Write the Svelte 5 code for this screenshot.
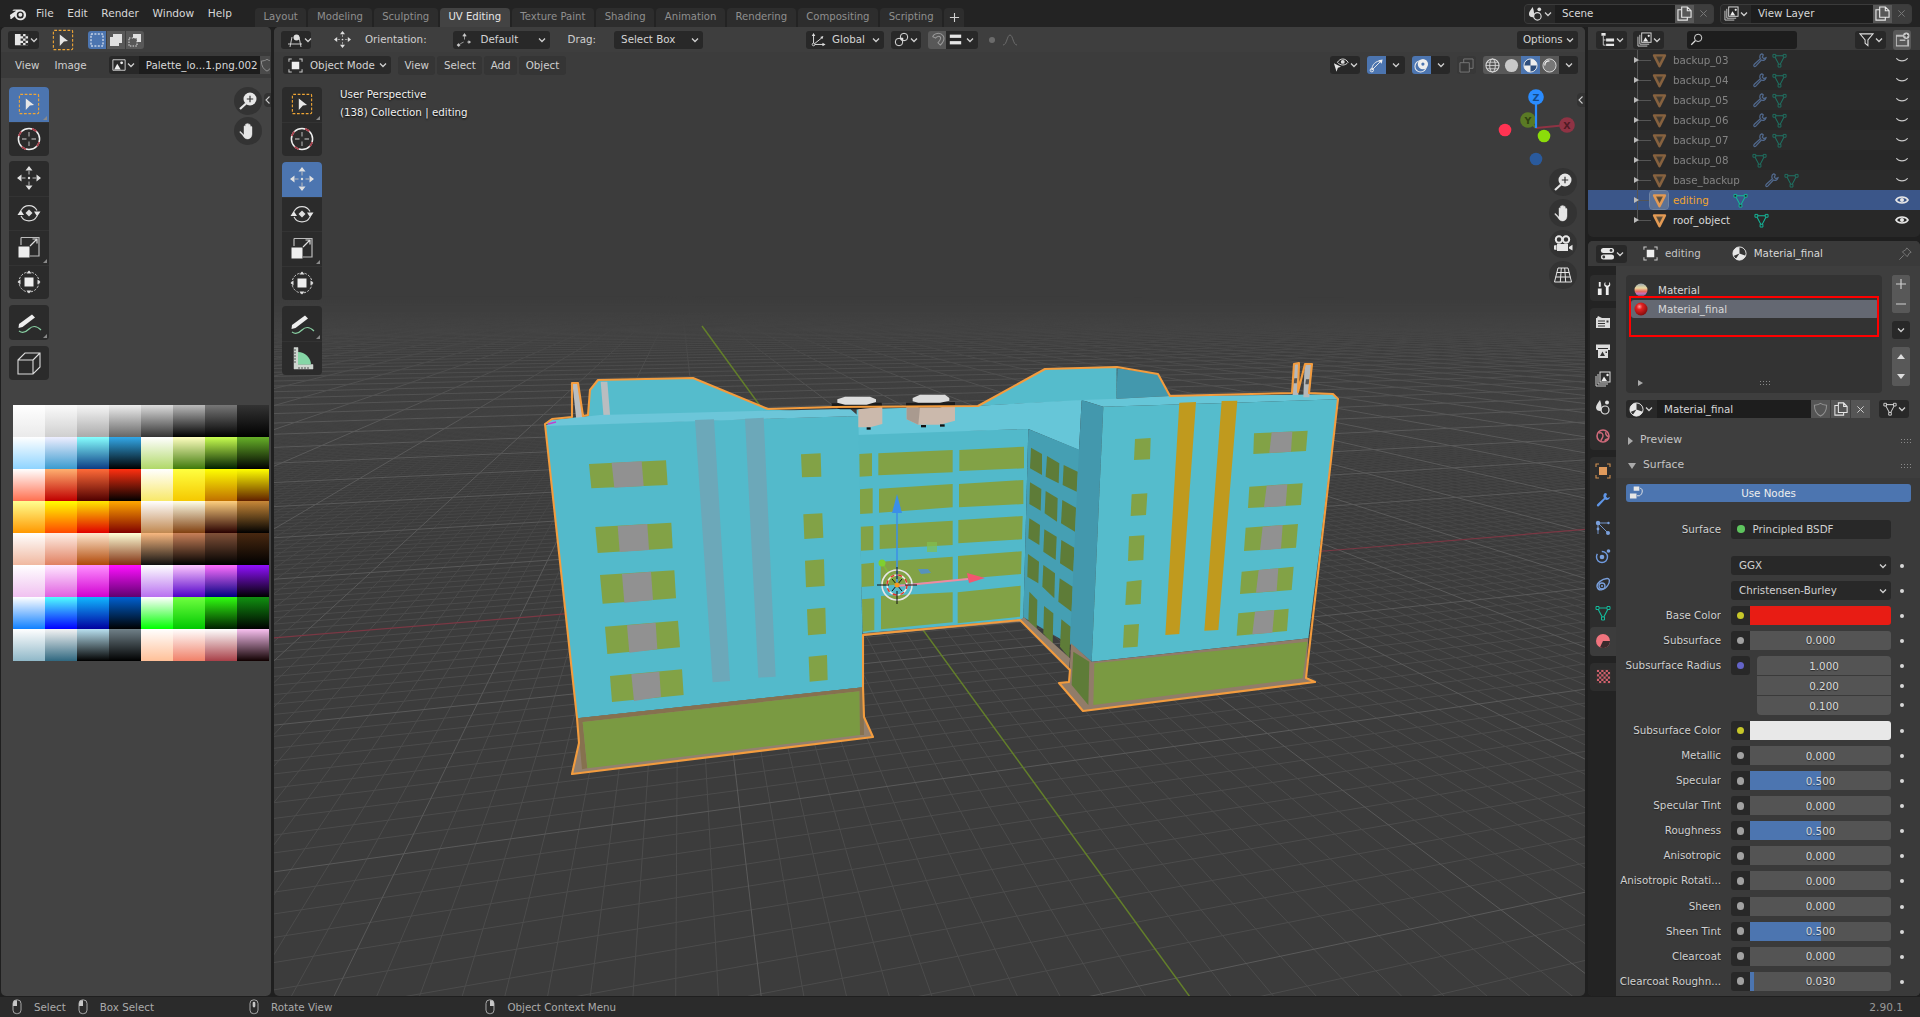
<script>
  const VPY = [680, 290], VPX = [4450, 290], O = [893, 586];
  let minor = '', major = '';
  for (let k = -900; k <= 900; k++) {
    if (k === 0) continue;
    const xA = O[0] + 17.9 * k;
    const t = (1000 - 290) / (O[1] - 290), t0 = 3 / (O[1] - 290);
    const seg = `M${(680 + (xA - 680) * t0).toFixed(1)} 293L${(680 + (xA - 680) * t).toFixed(1)} 1000`;
    if (k % 10 === 0) major += seg; else if (Math.abs(k) < 700) minor += seg;
  }
  for (let j = -35; j <= 1500; j++) {
    if (j === 0) continue;
    const v = 1 + 0.019 * j;
    if (v < 0.3) continue;
    const h = (O[1] - 290) / v, px = 680 + (O[0] - 680) * h / (O[1] - 290);
    const yAt = (x) => (290 + h * (VPX[0] - x) / (VPX[0] - px)).toFixed(1);
    const seg = `M270 ${yAt(270)}L1590 ${yAt(1590)}`;
    if (j % 10 === 0) { if (h > 3) major += seg; } else if (h > 30) minor += seg;
  }

  const G = '#82a246', GD = '#7a9a42', GR = '#919191', DG = '#5e7c38';
  const back = [
    ['#55bccc', '235,167 435,58 650,50 650,150 545,152'],
    ['#4398ad', '652,55 775,72 808,138 650,146'],
    ['#52b9ca', '-130,250 385,237 370,812 -112,850'],
    ['#66c6d8', '-130,178 235,167 545,150 537,300 385,237 -130,255'],
    ['#cbb9ac', '20,170 165,170 165,212 120,224 55,224 20,208'],
    ['#a99a8f', '20,170 60,170 55,224 20,208'],
    ['#1c1c1c', '18,158 165,156 165,166 120,172 60,172 18,168'],
    ['#dcdcdc', '38,144 60,134 135,134 148,144 148,152 120,158 55,158 38,154'],
    ['#111', '63,225 78,225 78,232 63,232'],
    ['#111', '120,223 134,223 134,230 120,230'],
    [G, '-122,312 -84,310 -84,378 -122,380'], [G, '-120,418 -82,415 -82,490 -120,492'], [G, '-118,530 -80,528 -80,600 -118,602'], [G, '-116,642 -78,638 -78,708 -116,711'], [G, '-114,748 -77,745 -77,840 -112,845'],
    [G, '-65,310 158,300 158,367 -65,376'], [G, '-63,416 158,402 158,472 -63,488'], [G, '-61,525 158,512 158,585 -61,597'], [G, '-58,635 158,620 158,690 -58,708'], [G, '-57,738 158,727 158,817 -57,838'],
    [G, '178,300 372,290 372,355 178,363'], [G, '177,402 370,390 370,462 177,472'], [G, '175,510 368,498 366,568 175,580'], [G, '174,618 365,604 363,672 174,688'], [G, '173,727 362,707 360,800 173,820'],
    ['#8f7b69', '-112,850 360,808 368,815 -112,858'],
    ['#459fb3', '385,237 540,300 512,885 370,802'],
    [DG, '393,293 426,312 426,375 390,355'], [DG, '441,318 478,340 476,400 437,380'], [DG, '491,345 533,365 530,425 488,405'],
    [DG, '390,397 424,417 422,482 388,462'], [DG, '437,423 473,445 471,515 434,490'], [DG, '487,450 528,473 525,545 483,520'],
    [DG, '388,505 420,525 418,585 385,565'], [DG, '433,538 470,560 467,630 430,605'], [DG, '484,570 523,593 520,665 480,640'],
    [DG, '384,612 417,635 415,700 382,680'], [DG, '430,645 465,670 463,745 427,710'], [DG, '479,685 518,710 515,785 475,755'],
    [DG, '388,725 412,750 410,845 385,815'], [DG, '432,768 460,790 458,885 430,850'], [DG, '484,808 512,830 508,925 480,890'],
    ['#93806e', '360,810 372,802 510,925 507,960'],
    ['#66c6d8', '545,150 610,170 1315,148 1300,133 810,138 650,146'],
    ['#4398ad', '545,150 610,170 575,935 510,880 537,300'],
    ['#55bccc', '610,170 1315,148 1225,865 575,935'],
    ['#c09a1e', '838,158 888,156 838,852 796,855'], ['#c09a1e', '965,153 1012,152 955,840 913,842'],
    [G, '705,267 752,264 750,328 702,330'], [G, '695,433 742,430 738,495 692,498'], [G, '687,559 733,556 730,630 684,633'], [G, '680,695 725,690 722,762 676,765'], [G, '672,825 717,822 713,890 669,893'],
    [G, '1062,250 1223,242 1218,303 1060,312'], [GR, '1115,247 1177,245 1173,305 1108,309'],
    [G, '1048,410 1208,400 1203,465 1044,474'], [GR, '1100,407 1162,403 1157,468 1092,472'],
    [G, '1037,533 1194,522 1188,593 1032,603'], [GR, '1088,530 1148,525 1143,596 1080,601'],
    [G, '1025,665 1181,650 1175,720 1020,732'], [GR, '1076,660 1135,655 1130,723 1068,728'],
    [G, '1015,790 1166,776 1161,843 1010,857'], [GR, '1065,785 1123,780 1117,848 1057,853'],
    ['#917c69', '513,880 575,935 1225,865 1218,985 1245,995 550,1083 478,1000 507,995'],
    [GD, '583,940 1222,875 1208,985 580,1065'],
    [DG, '520,905 568,935 565,1065 515,1005'],
    ['#b4b8bb', '1182,42 1198,40 1195,135 1178,135'], ['#b4b8bb', '1214,42 1236,42 1228,142 1210,142'],
    ['#555', '1183,85 1192,85 1190,100 1181,100'], ['#555', '1218,88 1228,88 1226,103 1216,103'],
  ];
  const front = [
    ['#55bccc', '210,120 235,90 520,84 745,178 1015,195 75,222 95,210 205,198'],
    ['#b9bdc0', '157,98 175,98 190,218 170,220'], ['#b9bdc0', '242,95 262,95 272,216 252,216'],
    ['#53bacb', '75,225 1015,198 1030,1012 172,1105'],
    ['#6cc6d9', '80,228 1015,198 990,176 240,195 90,212'],
    ['#6ca8b9', '525,210 582,208 630,993 578,997'], ['#6ca8b9', '675,206 731,203 767,980 715,983'],
    [G, '207,342 438,331 443,405 214,415'], [GR, '275,338 365,334 371,408 283,413'],
    [G, '226,531 454,518 458,595 233,609'], [GR, '293,528 382,522 387,600 299,606'],
    [G, '240,675 463,661 468,745 248,761'], [GR, '306,672 393,665 399,750 313,758'],
    [G, '255,830 474,812 480,892 262,912'], [GR, '321,826 407,818 412,898 328,908'],
    [G, '270,978 486,958 491,1035 276,1056'], [GR, '334,973 418,965 423,1040 342,1053'],
    [G, '843,313 902,310 904,380 846,382'], [G, '850,493 907,490 910,563 853,567'], [G, '855,632 912,628 914,708 858,712'], [G, '861,778 916,773 918,851 864,856'], [G, '866,920 921,915 923,990 869,995'],
    ['#93806e', '172,1105 1030,1012 1032,1100 1060,1160 157,1272 178,1180'],
    ['#86714f', '172,1105 1030,1012 1032,1155 1018,1155 1018,1024 188,1116 202,1255 186,1258'],
    [GD, '188,1116 1018,1024 1020,1155 202,1255'],
    ['#1c1c1c', '935,160 1085,158 1087,172 1015,178 960,178 935,170'],
    ['#cbb9ac', '1015,178 1087,170 1087,222 1050,232 1015,232'],
    ['#dcdcdc', '952,148 975,140 1050,140 1068,148 1068,156 1040,164 975,164 952,158'],
    ['#111', '1040,232 1052,232 1052,239 1040,239'],
  ];
  const outline = 'M545 424L552 419L572 417L572 383L578 383L583 416L588 415L590 390L598 380L693 378L768 409L833 407L978 406L1045 369L1117 367L1158 374L1170 396L1292 393L1294 364L1299 363L1298 392L1305 364L1312 364L1309 393L1333 394L1338 399L1308 660L1306 678L1315 682L1083 711L1059 683L1069 682L1070 670L1020 620L863 635L863 687L864 717L873 737L572 774L579 743L577 718Z';

  const ramps = [
    ['#fff,#eaeaea','#fbfbfb,#cfcfcf','#f6f6f6,#aaa','#eee,#666','#ddd,#333','#bbb,#000','#777,#000','#333,#000'],
    ['#fff,#8fd4ff','#eef,#3a9bcf','#86ffff,#0c3c84','#33a8e8,#000','#fff,#b0d868','#ffffc0,#3f7a0a','#c8ff50,#002000','#66b028,#000'],
    ['#fff,#ff7050','#ffb070,#c00000','#ff6a38,#500000','#ff3010,#000','#fff,#f8e868','#ffff40,#f5c800','#ffff00,#c07000','#ffff00,#602000'],
    ['#ffff90,#ff9800','#ffff00,#ff4800','#ffe800,#e00000','#ffa800,#800000','#fff,#c08850','#ffffe8,#804010','#ffd080,#280000','#c88838,#000'],
    ['#fff,#f0b8a0','#fff0e8,#e08060','#ffe8d0,#b04808','#ffffd8,#803010','#f8b880,#101010','#c88058,#000','#805038,#000','#482810,#000'],
    ['#fff,#f0c0f0','#ffe8ff,#e060e0','#ff90ff,#d000d0','#ff10ff,#600070','#fff,#b870f0','#ffc8ff,#5000c8','#ff70ff,#000080','#9010ff,#000'],
    ['#fff,#1080ff','#50ffff,#0000ff','#10b8ff,#0000a0','#0060d0,#000','#fff,#00ff00','#70ff40,#00c800','#30ff10,#002000','#109010,#000'],
    ['#fff,#90b8c8','#f4f4f4,#306880','#b8e0f0,#000','#708088,#000','#fff,#ffc098','#fff,#f08068','#fff,#a84048','#f8c0f0,#100000'],
  ].flat();

  const menus = ['File', 'Edit', 'Render', 'Window', 'Help'];
  const tabs = ['Layout', 'Modeling', 'Sculpting', 'UV Editing', 'Texture Paint', 'Shading', 'Animation', 'Rendering', 'Compositing', 'Scripting'];
  const objs = [
    ['backup_03', 1], ['backup_04', 1], ['backup_05', 1], ['backup_06', 1], ['backup_07', 1], ['backup_08', 0], ['base_backup', 1],
  ];
  const props = [
    { l: 'Metallic', v: '0.000', f: 0 }, { l: 'Specular', v: '0.500', f: 50 }, { l: 'Specular Tint', v: '0.000', f: 0 },
    { l: 'Roughness', v: '0.500', f: 50 }, { l: 'Anisotropic', v: '0.000', f: 0 }, { l: 'Anisotropic Rotati...', v: '0.000', f: 0 },
    { l: 'Sheen', v: '0.000', f: 0 }, { l: 'Sheen Tint', v: '0.500', f: 50 }, { l: 'Clearcoat', v: '0.000', f: 0 },
    { l: 'Clearcoat Roughn...', v: '0.030', f: 3 }, { l: '', v: '', f: 0 },
  ];
  const tg2 = ['t-render', 't-output', 't-layer', 't-scene', 't-world'];
  const tg3 = ['t-object', 't-mod', 't-part', 't-phys', 't-cons', 't-data', 't-mat'];
</script>

{#snippet ic(n, s = 16)}<svg class="ic" width={s} height={s}><use href={'#' + n} /></svg>{/snippet}
{#snippet chev()}<svg class="ic chev" width="10" height="10"><use href="#chev" /></svg>{/snippet}

<svg class="defs" width="0" height="0" aria-hidden="true">
  <defs>
    <symbol id="chev" viewBox="0 0 10 10"><path d="M2 3.5 5 6.5 8 3.5" fill="none" stroke="currentColor" stroke-width="1.3" /></symbol>
    <symbol id="logo" viewBox="0 0 20 20"><path d="M1 11.2 8 6.3H3.6L5.2 5H12.5C16 5 19 7.6 19 11S16 17 12.5 17C9.5 17 7 15.2 6.5 12.6L3 15.2C2 16 .6 14.9 1.6 14Z" fill="#e6e6e6" /><circle cx="12.5" cy="11" r="3.9" fill="#232323" /><circle cx="12.6" cy="10.9" r="2.2" fill="#e6e6e6" /></symbol>
    <symbol id="select" viewBox="0 0 24 24"><rect x="1.5" y="1.5" width="21" height="21" rx="1" fill="none" stroke="#f0a635" stroke-width="1.2" stroke-dasharray="3 1.8" /><path d="M8.5 6 17.5 13 13 13.5 8.5 18.5Z" fill="#e6e6e6" /></symbol>
    <symbol id="cursor" viewBox="0 0 24 24"><circle cx="12" cy="12" r="10.6" fill="none" stroke="#eee" stroke-width="1.5" /><circle cx="12" cy="12" r="10.6" fill="none" stroke="#a83c48" stroke-width="1.6" stroke-dasharray="5 11.6" stroke-dashoffset="-3" /><path d="M12 5v4.5M12 14.5V19M5 12h4.5M14.5 12H19" stroke="#9a9a9a" stroke-width="1.3" /></symbol>
    <symbol id="move" viewBox="0 0 24 24"><g fill="#e0e0e0"><path d="M12 0 15.5 4.5H8.5ZM12 24 8.5 19.5H15.5ZM0 12 4.5 8.5V15.5ZM24 12 19.5 15.5V8.5Z" /><circle cx="12" cy="12" r="1.2" /></g><path d="M12 5v3.5M12 15.5V19M5 12h3.5M15.5 12H19" stroke="#bbb" stroke-width="1" /></symbol>
    <symbol id="rotate" viewBox="0 0 24 24"><path d="M4 9.5A9 9 0 0 1 20 9.5M20 15A9 9 0 0 1 4 15" fill="none" stroke="#ddd" stroke-width="1.1" /><path d="M.5 14 7 14 3.7 9ZM17 10.5 23.5 10.5 20.2 15.5Z" fill="#e6e6e6" /><path d="M12 8.5 15.5 12 12 15.5 8.5 12Z" fill="#ddd" /></symbol>
    <symbol id="scale" viewBox="0 0 24 24"><path d="M4 2.5H22V21H13" fill="none" stroke="#bbb" stroke-width="1.2" /><rect x="1.5" y="11.5" width="11" height="11" fill="#eee" /><path d="M13 11 20 4M15.5 4H20V8.5" fill="none" stroke="#ddd" stroke-width="1.2" /><path d="M4 2.5V10" stroke="#bbb" stroke-width="1.2" /></symbol>
    <symbol id="trans" viewBox="0 0 24 24"><circle cx="12" cy="12" r="10" fill="none" stroke="#ccc" stroke-width="1" stroke-dasharray="2.4 1.4" /><rect x="7.5" y="7.5" width="9" height="9" fill="#eee" /><path d="M12 .5 14.5 3.5H9.5ZM12 23.5 9.5 20.5H14.5ZM.5 12 3.5 9.5V14.5ZM23.5 12 20.5 14.5V9.5Z" fill="#ddd" /></symbol>
    <symbol id="annot" viewBox="0 0 26 24"><path d="M3 14 16 4.5 19 7.5 6.5 17 2.5 18Z" fill="#eee" /><path d="M3 21C7 24 10 22 13 19 16 16 20 15 25 20" fill="none" stroke="#88cfa2" stroke-width="1.2" /></symbol>
    <symbol id="cube" viewBox="0 0 26 26"><path d="M2 10 9 3H24L24 17 17 24H2Z M2 10H17V24M17 10 24 3" fill="none" stroke="#ddd" stroke-width="1.1" /></symbol>
    <symbol id="measure" viewBox="0 0 24 24"><path d="M4 1.5H8V18.5H23V23H4Z" fill="#cdd6cf" stroke="#ccc" stroke-width=".5" /><path d="M8 6C15 6 21 12 21 18.5H8Z" fill="#85d6a6" /><path d="M4 4h2M4 7h2M4 10h2M4 13h2M4 16h2M9 23v-2M12 23v-2M15 23v-2M18 23v-2" stroke="#333" stroke-width=".8" /></symbol>
    <symbol id="zoom" viewBox="0 0 20 20"><circle cx="12" cy="8" r="6.5" fill="#e6e6e6" /><path d="M8 12.5 2 18" stroke="#e6e6e6" stroke-width="2.2" /><path d="M12 4.8V11.2M8.8 8H15.2" stroke="#333" stroke-width="1.2" /></symbol>
    <symbol id="hand" viewBox="0 0 20 20"><path d="M3 11 6 14V5.5C6 4.5 7.5 4.5 7.5 5.5V3.5C7.5 2.5 9 2.5 9 3.5V9.5 3.2C9 2.2 10.7 2.2 10.7 3.2V9.5 4C10.7 3 12.3 3 12.3 4V10 6C12.3 5 14 5 14 6.2V13C14 16 12 18 9.5 18 7 18 6 16.5 4.5 14L2 11.5C1.4 10.4 2.3 10.2 3 11Z" fill="#e6e6e6" stroke="#e6e6e6" stroke-width=".4" /></symbol>
    <symbol id="cam" viewBox="0 0 20 20"><circle cx="6" cy="5.5" r="3.2" fill="none" stroke="#e6e6e6" stroke-width="2" /><circle cx="13" cy="5.5" r="3.2" fill="none" stroke="#e6e6e6" stroke-width="2" /><path d="M4 10H15V17H4ZM16 13 19.5 10.8V16.5L16 14.5ZM1 11.5 3.5 11V16L1 15.5Z" fill="#e6e6e6" /></symbol>
    <symbol id="gridp" viewBox="0 0 20 20"><path d="M5 3H15L18.5 17H1.5ZM3.8 7.5H16.2M2.6 12H17.4M8.3 3 7.3 17M11.7 3 12.7 17" fill="none" stroke="#e6e6e6" stroke-width="1" /></symbol>
    <symbol id="checker" viewBox="0 0 16 16"><path d="M1 2H15V14H1Z" fill="#e6e6e6" /><path d="M7 2h2.7v2.4H7ZM12.3 2H15v2.4h-2.7ZM9.7 4.4h2.6v2.4H9.7ZM7 6.8h2.7v2.4H7ZM12.3 6.8H15v2.4h-2.7ZM9.7 9.2h2.6v2.4H9.7ZM7 11.6h2.7V14H7ZM12.3 11.6H15V14h-2.7Z" fill="#333" /></symbol>
    <symbol id="image" viewBox="0 0 16 16"><path d="M1 2H15V14H1Z" fill="none" stroke="#ddd" /><path d="M2.5 13 6 6.5 10 13Z" fill="#eee" /><circle cx="11" cy="5.5" r="1.6" fill="#eee" /></symbol>
    <symbol id="objmode" viewBox="0 0 16 16"><path d="M1 4V1H4M12 1H15V4M15 12V15H12M4 15H1V12" fill="none" stroke="#ccc" stroke-width="1.1" /><rect x="4" y="4" width="8" height="8" fill="#eee" /></symbol>
    <symbol id="objedit" viewBox="0 0 16 16"><path d="M1 4V1H4M12 1H15V4M15 12V15H12M4 15H1V12" fill="none" stroke="#d09050" stroke-width="1.1" /><rect x="4" y="4" width="8" height="8" fill="#e09a5c" /></symbol>
    <symbol id="tool" viewBox="0 0 16 16"><path d="M3 1h2v5H3ZM2 8h4v7H2Z" fill="#eee" /><path d="M10 1V4L12 5 14 4V1C15.5 2 16 5 13.5 6.5V15H10.5V6.5C8 5 8.5 2 10 1Z" fill="#eee" /></symbol>
    <symbol id="sceneic" viewBox="0 0 16 16"><path d="M5 1C3 4 1 6 1 8.5S3 12 5 12 6.5 11 6.5 9.5C6.5 6 6 4 5 1Z" fill="#ddd" /><circle cx="12" cy="3.5" r="2" fill="#ddd" /><circle cx="10" cy="11" r="4" fill="none" stroke="#ddd" stroke-width="1.2" /></symbol>
    <symbol id="layers" viewBox="0 0 16 16"><path d="M1 5V15H11M3 3V13H13" fill="none" stroke="#ccc" /><rect x="5" y="1" width="10" height="10" fill="none" stroke="#ddd" /><path d="M6.5 10 9 5.5 12 10Z" fill="#eee" /><circle cx="12.5" cy="4" r="1.2" fill="#eee" /></symbol>
    <symbol id="copy" viewBox="0 0 16 16"><path d="M5 1H11L15 5V12H5ZM11 1V5H15M5 4H1V15H11V12" fill="none" stroke="#e6e6e6" stroke-width="1.2" /></symbol>
    <symbol id="x" viewBox="0 0 10 10"><path d="M1.5 1.5 8.5 8.5M8.5 1.5 1.5 8.5" stroke="currentColor" stroke-width="1.1" /></symbol>
    <symbol id="tree" viewBox="0 0 16 16"><path d="M1.5 1H6V4H1.5ZM6.5 7H15V10H6.5ZM6.5 12.5H15V15H6.5Z" fill="#e6e6e6" /><path d="M3.5 4V14H6M3.5 8.5H6" fill="none" stroke="#ccc" /></symbol>
    <symbol id="funnel" viewBox="0 0 16 16"><path d="M1 2H15L9.5 8.5V14.5L6.5 12V8.5Z" fill="none" stroke="#ddd" stroke-width="1.1" /></symbol>
    <symbol id="newcoll" viewBox="0 0 16 16"><path d="M1 3H9V5H2V14H13V8H15V15.5H1Z" fill="#bbb" /><rect x="5" y="8" width="6" height="1.6" fill="#bbb" /><circle cx="12" cy="4" r="3.4" fill="#ccc" /><path d="M12 2V6M10 4H14" stroke="#333" /></symbol>
    <symbol id="search" viewBox="0 0 16 16"><circle cx="10" cy="6" r="4.5" fill="none" stroke="#ddd" stroke-width="1.2" /><path d="M6.5 9.5 1.5 14.5" stroke="#ddd" stroke-width="1.5" /></symbol>
    <symbol id="tri" viewBox="0 0 16 16"><path d="M2.2 2.5H13.8L8 14Z" fill="#6e5a40" stroke="#e39a54" stroke-width="2.6" stroke-linejoin="round" /><path d="M5.6 4.7H10.4L8 9.6Z" fill="#2b2b2b" opacity=".35" /></symbol>
    <symbol id="wrench" viewBox="0 0 16 16"><path d="M10 1C8 2 8 5 9 6L2.5 12C1 13.500 2.500 15.500 4 14L10 7.500C12 8.500 14.500 7.500 15 5L12.500 6 11 4.500 12 2C11.500 1.300 10.800 1 10 1Z" fill="none" stroke="#78a8f0" stroke-width="1.3" /></symbol>
    <symbol id="wrenchf" viewBox="0 0 16 16"><path d="M10 1C8 2 8 5 9 6L2.5 12C1 13.500 2.500 15.500 4 14L10 7.500C12 8.500 14.500 7.500 15 5L12.500 6 11 4.500 12 2C11.500 1.300 10.800 1 10 1Z" fill="#5f95e6" /></symbol>
    <symbol id="mesh" viewBox="0 0 16 16"><path d="M2.500 3H13.500L8 13.500Z" fill="none" stroke="#14b89a" stroke-width="1.100" /><path d="M1 1.500H4V4.500H1ZM12 1.500H15V4.500H12ZM6.500 12H9.500V15H6.500Z" fill="#282828" stroke="#14b89a" stroke-width="1" /></symbol>
    <symbol id="meshw" viewBox="0 0 16 16"><path d="M2.500 3H13.500L8 13.500Z" fill="none" stroke="#ddd" stroke-width="1.100" /><path d="M1 1.500H4V4.500H1ZM12 1.500H15V4.500H12ZM6.500 12H9.500V15H6.500Z" fill="#282828" stroke="#ddd" stroke-width="1" /></symbol>
    <symbol id="eye" viewBox="0 0 16 16"><path d="M1 8C4 3.500 12 3.500 15 8 12 12.500 4 12.500 1 8Z" fill="none" stroke="#e6e6e6" stroke-width="1.600" /><circle cx="8" cy="8" r="2.300" fill="#e6e6e6" /></symbol>
    <symbol id="eyeoff" viewBox="0 0 16 16"><path d="M1.500 6C4.500 10 11.500 10 14.500 6" fill="none" stroke="#c8c8c8" stroke-width="1.200" /></symbol>
    <symbol id="props" viewBox="0 0 16 16"><rect x="1" y="2" width="14" height="5.500" rx="2.700" fill="#e6e6e6" /><circle cx="11.800" cy="4.700" r="1.500" fill="#333" /><rect x="1" y="9" width="14" height="5.500" rx="2.700" fill="#e6e6e6" /><circle cx="4" cy="11.700" r="1.500" fill="#333" /></symbol>
    <symbol id="mat" viewBox="0 0 16 16"><circle cx="8" cy="8" r="7" fill="#333" stroke="#e6e6e6" stroke-width="1" /><path d="M8 1A7 7 0 0 0 1.500 10.600L8 8ZM8 8 14.600 10.500A7 7 0 0 1 4 13.800Z" fill="#e6e6e6" /></symbol>
    <symbol id="pin" viewBox="0 0 16 16"><path d="M10 1 15 6 13 7 10.500 11 5 5.500 9 3ZM6.500 9.500 1.500 14.500" fill="none" stroke="#7a7a7a" stroke-width="1.100" /></symbol>
    <symbol id="t-render" viewBox="0 0 16 16"><path d="M1 4H15V14H1Z" fill="#ddd" /><path d="M3 2 7 4H2Z" fill="#ddd" /><path d="M3 7H10M3 9.500H10M3 12H10" stroke="#333" /><rect x="11.500" y="6.500" width="2" height="2" fill="#333" /></symbol>
    <symbol id="t-output" viewBox="0 0 16 16"><path d="M1 1.500H15V7H13V5H3V7H1Z" fill="#ddd" /><path d="M3 6H13V15H3Z" fill="#ddd" /><path d="M5 13 7.500 8.500 10 13ZM10.500 8.500h1.500v1.500h-1.500Z" fill="#333" /></symbol>
    <symbol id="t-scene" viewBox="0 0 16 16"><use href="#sceneic" /></symbol>
    <symbol id="t-layer" viewBox="0 0 16 16"><use href="#layers" /></symbol>
    <symbol id="t-world" viewBox="0 0 16 16"><circle cx="8" cy="8" r="6" fill="none" stroke="#d06a7a" stroke-width="1.600" /><path d="M4 5C7 4 8 6 8 8S6 11 6 13M11 4C10 6 12 8 13.500 9M10 13C10 11 12.500 11 13 11" fill="none" stroke="#d06a7a" stroke-width="1.400" /></symbol>
    <symbol id="t-object" viewBox="0 0 16 16"><use href="#objedit" /></symbol>
    <symbol id="t-mod" viewBox="0 0 16 16"><use href="#wrenchf" /></symbol>
    <symbol id="t-part" viewBox="0 0 16 16"><g fill="#7aa0dc"><circle cx="3" cy="3" r="2.200" /><circle cx="3" cy="9" r="1.400" /><circle cx="13.500" cy="3" r="1.200" /><circle cx="13" cy="13" r="2" /></g><path d="M3 3 13 13M3 3H13M3 3V14" stroke="#7aa0dc" stroke-width=".9" /></symbol>
    <symbol id="t-phys" viewBox="0 0 16 16"><circle cx="7" cy="9" r="5.500" fill="none" stroke="#6f9adf" stroke-width="1.400" stroke-dasharray="20 5" /><circle cx="7" cy="9" r="2.300" fill="#7aa0dc" /><circle cx="13.500" cy="3" r="1.800" fill="#7aa0dc" /></symbol>
    <symbol id="t-cons" viewBox="0 0 16 16"><path d="M2 9.500C1.500 6 7 2 12 1.500 15 1.200 15 5 13 8 10.500 12.500 3.500 15.500 2 9.500Z" fill="none" stroke="#7aa0dc" stroke-width="1.300" /><circle cx="7" cy="9" r="3" fill="none" stroke="#7aa0dc" stroke-width="1.300" /><circle cx="7" cy="9" r="1" fill="#7aa0dc" /></symbol>
    <symbol id="t-data" viewBox="0 0 16 16"><use href="#mesh" /></symbol>
    <symbol id="t-mat" viewBox="0 0 16 16"><circle cx="8" cy="8" r="7" fill="#f0747e" /><path d="M8 8 15 8A7 7 0 0 1 5 14.300Z" fill="#3a2a2c" /></symbol>
    <symbol id="t-tex" viewBox="0 0 16 16"><path d="M1 1H15V15H1Z" fill="#d0606c" /><path d="M3.300 1H5.600V3.300H3.300ZM8 1h2.300v2.300H8ZM12.700 1H15v2.300h-2.300ZM1 3.300h2.300v2.300H1ZM5.600 3.300H8v2.300H5.600ZM10.300 3.300h2.400v2.300h-2.400ZM3.300 5.600h2.300V8H3.300ZM8 5.600h2.300V8H8ZM12.700 5.600H15V8h-2.300ZM1 8h2.300v2.300H1ZM5.600 8H8v2.300H5.600ZM10.300 8h2.400v2.300h-2.400ZM3.300 10.300h2.300v2.400H3.300ZM8 10.300h2.300v2.400H8ZM12.700 10.300H15v2.400h-2.300ZM1 12.700h2.300V15H1ZM5.600 12.700H8V15H5.600ZM10.300 12.700h2.400V15h-2.400Z" fill="#2d2d2d" /></symbol>
    <symbol id="orient" viewBox="0 0 20 16"><path d="M10 1 12 4H8ZM3 13a1.500 1.500 0 1 0 .1 0ZM10 4V8M13 11H17M17 11 15 9.500V12.500ZM9 11 5 13" fill="#ccc" stroke="#ccc" stroke-width=".8" /></symbol>
    <symbol id="global" viewBox="0 0 18 18"><path d="M4 4V14H15M4 14 14 6" fill="none" stroke="#ddd" stroke-width="1.100" /><circle cx="4" cy="14" r="1.500" fill="#333" stroke="#ddd" /><path d="M4 1 6 4.500H2ZM17.500 14 14 16V12ZM15 4.500 14 8 11.500 5.500Z" fill="#ddd" /></symbol>
    <symbol id="pivot" viewBox="0 0 18 18"><circle cx="6" cy="12" r="4.500" fill="none" stroke="#ddd" stroke-width="1.200" /><circle cx="12" cy="6" r="4.500" fill="none" stroke="#ddd" stroke-width="1.200" /><circle cx="9.500" cy="8.500" r="1.800" fill="#ddd" /></symbol>
    <symbol id="magnet" viewBox="0 0 16 16"><path d="M3 5C4 1 11 0 14 4 16 7 14 11 11 14L8.500 11.500C11 9 12 7 11 5.500 10 4 7 4.500 6 6.500Z" fill="none" stroke="#9a9a9a" stroke-width="1.100" /></symbol>
    <symbol id="snap" viewBox="0 0 16 16"><rect x="1" y="2" width="14" height="4" fill="#e6e6e6" /><rect x="1" y="10" width="14" height="4" fill="#e6e6e6" /></symbol>
    <symbol id="vis" viewBox="0 0 18 18"><path d="M5 6C8 1 14 1 17 6 14 10 8 10 5 6Z" fill="none" stroke="#ddd" stroke-width="1.100" /><circle cx="11" cy="5.500" r="2.200" fill="#ddd" /><path d="M1 7 9 11 5.500 12 4 16.500Z" fill="#e6e6e6" /></symbol>
    <symbol id="gizmo" viewBox="0 0 16 16"><path d="M3 13C3 7 7 3 13 3M3 13 13 3" fill="none" stroke="#eee" stroke-width="1" /><circle cx="3" cy="13" r="1.800" fill="none" stroke="#eee" /><path d="M14.500 1.500 13.500 6 10 2.500Z" fill="#eee" /></symbol>
    <symbol id="overlay" viewBox="0 0 16 16"><circle cx="7" cy="9" r="6" fill="none" stroke="#eee" stroke-width="1.100" /><circle cx="9.500" cy="6.500" r="5.500" fill="#eee" /><circle cx="9.500" cy="6.500" r="1.700" fill="#4c75b0" /></symbol>
    <symbol id="xray" viewBox="0 0 16 16"><path d="M5 1H15V11H11M5 1V5" fill="none" stroke="#777" stroke-width="1" /><path d="M1 5H11V15H1Z" fill="none" stroke="#777" stroke-width="1" /></symbol>
    <symbol id="wire" viewBox="0 0 16 16"><circle cx="8" cy="8" r="7" fill="none" stroke="#ddd" stroke-width="1.100" /><ellipse cx="8" cy="8" rx="3" ry="7" fill="none" stroke="#ddd" stroke-width="1" /><path d="M1 8H15M2 4.500H14M2 11.500H14" stroke="#ddd" stroke-width=".8" /></symbol>
    <symbol id="solid" viewBox="0 0 16 16"><circle cx="8" cy="8" r="7" fill="#c8c8c8" /></symbol>
    <symbol id="matball" viewBox="0 0 16 16"><circle cx="8" cy="8" r="7" fill="#2f4e7c" stroke="#eee" stroke-width="1" /><path d="M8 1A7 7 0 0 1 15 8H8ZM8 8V15A7 7 0 0 1 1 8Z" fill="#eee" /></symbol>
    <symbol id="rendball" viewBox="0 0 16 16"><circle cx="8" cy="8" r="7" fill="#777" stroke="#ddd" stroke-width="1" /><path d="M3 8C3 5 5 3 8 3" fill="none" stroke="#eee" stroke-width="1.300" /></symbol>
    <symbol id="shield" viewBox="0 0 16 16"><path d="M8 1.500C10 3 12 3.300 14.500 3.500 14.500 9 12 13 8 15 4 13 1.500 9 1.500 3.500 4 3.300 6 3 8 1.500Z" fill="none" stroke="#929292" stroke-width="1.100" /></symbol>
    <symbol id="plus" viewBox="0 0 12 12"><path d="M6 1V11M1 6H11" stroke="#d0d0d0" stroke-width="1.200" /></symbol>
    <symbol id="minus" viewBox="0 0 12 12"><path d="M1 6H11" stroke="#d0d0d0" stroke-width="1.200" /></symbol>
    <symbol id="nodes" viewBox="0 0 16 16"><path d="M5 1.500H11V6H5ZM1 9H8V14.500H1Z" fill="#e6e6e6" /><path d="M12 3.500C15 3.500 15 10 11 11.500H8.500" fill="none" stroke="#e6e6e6" /></symbol>
    <symbol id="mouseL" viewBox="0 0 12 18"><rect x="1.500" y="1" width="9" height="15.500" rx="4" fill="none" stroke="#b8b8b8" /><path d="M6 1.500H5.500A4 4 0 0 0 1.500 5.500V8H6Z" fill="#c8c8c8" /></symbol>
    <symbol id="mouseM" viewBox="0 0 12 18"><rect x="1.500" y="1" width="9" height="15.500" rx="4" fill="none" stroke="#b8b8b8" /><rect x="4.500" y="3" width="3" height="6.500" rx="1.500" fill="#c8c8c8" /></symbol>
    <symbol id="mouseR" viewBox="0 0 12 18"><rect x="1.500" y="1" width="9" height="15.500" rx="4" fill="none" stroke="#b8b8b8" /><path d="M6 1.500H6.500A4 4 0 0 1 10.500 5.500V8H6Z" fill="#c8c8c8" /></symbol>
    <radialGradient id="redball" cx=".38" cy=".32" r=".75"><stop offset="0" stop-color="#ff9a9a" /><stop offset=".3" stop-color="#e22222" /><stop offset="1" stop-color="#7a0a0a" /></radialGradient>
  </defs>
</svg>

<div class="root">
  <header class="topbar">
    <span class="logo">{@render ic('logo', 18)}</span>
    <nav class="menus">{#each menus as m}<span>{m}</span>{/each}</nav>
    <nav class="tabs">
      {#each tabs as t}<span class="tab" class:on={t === 'UV Editing'}>{t}</span>{/each}
      <span class="tab plus">{@render ic('plus', 11)}</span>
    </nav>
    <div class="spring"></div>
    <div class="idbox">
      <span class="idic">{@render ic('sceneic', 15)}{@render chev()}</span>
      <span class="idname">Scene</span>
      <span class="idbtn lit">{@render ic('copy', 15)}</span>
      <span class="idbtn dim"><svg class="ic" width="9" height="9"><use href="#x" /></svg></span>
    </div>
    <div class="idbox vl">
      <span class="idic">{@render ic('layers', 15)}{@render chev()}</span>
      <span class="idname">View Layer</span>
      <span class="idbtn lit">{@render ic('copy', 15)}</span>
      <span class="idbtn dim"><svg class="ic" width="9" height="9"><use href="#x" /></svg></span>
    </div>
  </header>

  <main class="main">
    <section class="area imgedit">
      <div class="bar bar1">
        <span class="btn dd w32">{@render ic('checker', 15)}{@render chev()}</span>
        <span class="selbig">{@render ic('select', 22)}</span>
        <span class="seg">
          <span class="segb blue"><svg class="ic" width="14" height="14"><rect x="1" y="1" width="12" height="12" fill="none" stroke="#fff" stroke-dasharray="2 1.400" /></svg></span>
          <span class="segb"><svg class="ic" width="14" height="14"><path d="M4 1H13V10H10V13H1V4H4Z" fill="#e0e0e0" /></svg></span>
          <span class="segb"><svg class="ic" width="14" height="14"><path d="M5 1H13V9H5Z" fill="#e0e0e0" /><path d="M1 5H9V13H1Z" fill="#585858" stroke="#e0e0e0" stroke-dasharray="1.500 1.200" /></svg></span>
        </span>
      </div>
      <div class="bar bar2">
        <span class="mi first">View</span><span class="mi img">Image</span>
        <span class="imgpick">
          <span class="idic">{@render ic('image', 14)}{@render chev()}</span>
          <span class="idname">Palette_lo...1.png.002</span>
          <span class="clipbtn">{@render ic('shield', 14)}</span>
        </span>
      </div>
      <div class="canvas">
        <div class="tools ltools">
          <div class="tgroup">
            <span class="tb on corner">{@render ic('select', 22)}</span>
            <span class="tb">{@render ic('cursor', 24)}</span>
          </div>
          <div class="tgroup">
            <span class="tb">{@render ic('move', 24)}</span>
            <span class="tb">{@render ic('rotate', 24)}</span>
            <span class="tb corner">{@render ic('scale', 24)}</span>
            <span class="tb">{@render ic('trans', 24)}</span>
          </div>
          <div class="tgroup">
            <span class="tb corner">{@render ic('annot', 26)}</span>
          </div>
          <div class="tgroup">
            <span class="tb">{@render ic('cube', 26)}</span>
          </div>
        </div>
        <div class="navbtns leftnav">
          <span class="nb">{@render ic('zoom', 20)}</span>
          <span class="nb">{@render ic('hand', 20)}</span>
        </div>
        <span class="nchev"><svg class="ic" width="8" height="10"><path d="M5.500 1.500 2 5 5.500 8.500" fill="none" stroke="#ccc" stroke-width="1.100" /></svg></span>
        <div class="palette">{#each ramps as r}<i class="swatch" style="background:linear-gradient({r})"></i>{/each}</div>
      </div>
    </section>

    <section class="area view3d">
      <svg class="scene" viewBox="274 27 1311 970" width="1311" height="970" aria-hidden="true">
        <defs>
          <linearGradient id="fadeMin" gradientUnits="userSpaceOnUse" x1="0" y1="310" x2="0" y2="620"><stop offset="0" stop-color="#000" /><stop offset="1" stop-color="#fff" /></linearGradient>
          <linearGradient id="fadeMaj" gradientUnits="userSpaceOnUse" x1="0" y1="296" x2="0" y2="430"><stop offset="0" stop-color="#000" /><stop offset="1" stop-color="#fff" /></linearGradient>
          <mask id="mMin" maskUnits="userSpaceOnUse" x="270" y="27" width="1320" height="980"><rect x="270" y="27" width="1320" height="980" fill="url(#fadeMin)" /></mask>
          <mask id="mMaj" maskUnits="userSpaceOnUse" x="270" y="27" width="1320" height="980"><rect x="270" y="27" width="1320" height="980" fill="url(#fadeMaj)" /></mask>
        </defs>
        <path d={minor} stroke="#4c4c4c" fill="none" mask="url(#mMin)" />
        <path d={major} stroke="#5a5a5a" fill="none" mask="url(#mMaj)" />
        <path d="M270 638.300L1590 529" stroke="#7a3844" stroke-width="1.200" />
        <path d="M702 326L1190 997" stroke="#637f2a" stroke-width="1.500" />
        <g transform="translate(900 350) scale(.33333)">
          {#each back as [fill, points]}<polygon {fill} {points} />{/each}
        </g>
        <g transform="translate(520 350) scale(.33333)">
          {#each front as [fill, points]}<polygon {fill} {points} />{/each}
        </g>
        <path d={outline} fill="none" stroke="#f39c3e" stroke-width="2.100" stroke-linejoin="round" />
        <path d="M548 424 556 422" stroke="#c040d0" stroke-width="1.500" />
        <g>
          <path d="M897 586V510" stroke="#3b8fe8" stroke-width="2" opacity=".75" />
          <path d="M897 494 902 513H892Z" fill="#3b8fe8" />
          <path d="M897 586 968 579" stroke="#ef8aa0" stroke-width="2" />
          <path d="M985 578 967 573 969 583Z" fill="#f3566f" />
          <path d="M897 586 882 563" stroke="#7fbf30" stroke-width="1.500" opacity=".8" />
          <circle cx="882" cy="563" r="3.500" fill="#7fd030" />
          <rect x="927" y="542" width="10" height="10" fill="#80c050" opacity=".7" />
          <path d="M918 569 928 569 931 573 921 574Z" fill="#4c90d8" opacity=".8" />
          <circle cx="897" cy="585" r="15" fill="none" stroke="#e6e6e6" stroke-width="1.600" />
          <circle cx="897" cy="585" r="10" fill="none" stroke="#eee" stroke-width="1.500" />
          <circle cx="897" cy="585" r="10" fill="none" stroke="#e0352a" stroke-width="1.500" stroke-dasharray="4 4" />
          <path d="M877 585H889M905 585H917M897 567V579M897 591V604M892 579 902 591M892 591 902 579" stroke="#111" stroke-width="1" />
          <circle cx="897" cy="585" r="2.500" fill="#f59a20" />
        </g>
      </svg>

      <div class="bar bar1 vb1">
        <span class="btn dd w30"><svg class="ic" width="16" height="16"><path d="M1 12H15M5 5 3 15M12 5 14 15" stroke="#ddd" fill="none" stroke-width=".9" /><circle cx="9.500" cy="5.500" r="3" fill="#ddd" /></svg>{@render chev()}</span>
        <span class="vmove">{@render ic('move', 17)}</span>
        <span class="txt orient">Orientation:</span>
        <span class="btn iconb">{@render ic('orient', 17)}</span>
        <span class="btn dd dflt"><span class="grow">Default</span>{@render chev()}</span>
        <span class="txt drag">Drag:</span>
        <span class="btn dd selb"><span class="grow">Select Box</span>{@render chev()}</span>
        <span class="btn dd glob">{@render ic('global', 16)}<span class="grow gtxt">Global</span>{@render chev()}</span>
        <span class="btn dd piv">{@render ic('pivot', 15)}{@render chev()}</span>
        <span class="snapseg">
          <span class="magn">{@render ic('magnet', 15)}</span>
          <span class="btn dd snp">{@render ic('snap', 13)}{@render chev()}</span>
        </span>
        <span class="propedit">
          <svg class="ic" width="14" height="14"><circle cx="7" cy="7" r="3" fill="#777" /></svg>
          <svg class="ic" width="16" height="14"><path d="M1 12C5 12 5 2 8 2S11 12 15 12" fill="none" stroke="#777" /></svg>
        </span>
        <span class="btn dd opts">Options {@render chev()}</span>
      </div>
      <div class="bar vb2">
        <span class="btn dd omode">{@render ic('objmode', 15)}<span class="grow omt">Object Mode</span>{@render chev()}</span>
        <span class="mi b mview">View</span><span class="mi b">Select</span><span class="mi b">Add</span><span class="mi b">Object</span>
        <span class="spring"></span>
        <span class="btn dd w30b">{@render ic('vis', 16)}{@render chev()}</span>
        <span class="joined j1"><span class="jb blue">{@render ic('gizmo', 15)}</span><span class="jb">{@render chev()}</span></span>
        <span class="joined j2"><span class="jb blue">{@render ic('overlay', 15)}</span><span class="jb">{@render chev()}</span></span>
        <span class="jb xr">{@render ic('xray', 15)}</span>
        <span class="joined j3">
          <span class="jb g">{@render ic('wire', 15)}</span><span class="jb g">{@render ic('solid', 15)}</span><span class="jb blue">{@render ic('matball', 15)}</span><span class="jb g">{@render ic('rendball', 15)}</span><span class="jb">{@render chev()}</span>
        </span>
      </div>

      <div class="tools vtools">
        <div class="tgroup">
          <span class="tb corner">{@render ic('select', 22)}</span>
          <span class="tb">{@render ic('cursor', 24)}</span>
        </div>
        <div class="tgroup">
          <span class="tb on">{@render ic('move', 24)}</span>
          <span class="tb">{@render ic('rotate', 24)}</span>
          <span class="tb corner">{@render ic('scale', 24)}</span>
          <span class="tb">{@render ic('trans', 24)}</span>
        </div>
        <div class="tgroup">
          <span class="tb corner">{@render ic('annot', 26)}</span>
          <span class="tb">{@render ic('measure', 24)}</span>
        </div>
      </div>
      <div class="vinfo"><div>User Perspective</div><div>(138) Collection | editing</div></div>

      <svg class="navgizmo" viewBox="0 0 90 90" width="90" height="90" aria-hidden="true">
        <circle cx="20" cy="55" r="6.300" fill="#ff3352" />
        <circle cx="59" cy="61" r="6.300" fill="#8bdc0a" />
        <circle cx="51" cy="84" r="6.300" fill="#2a5a9c" />
        <path d="M51 53 43 45" stroke="#5a7a25" stroke-width="2" />
        <circle cx="43" cy="45" r="7.800" fill="#5a7a25" />
        <path d="M51 53 82 50" stroke="#8f3344" stroke-width="2.200" />
        <circle cx="82" cy="50" r="7.800" fill="#8f3344" />
        <path d="M51 53V22" stroke="#2a8cff" stroke-width="2.200" />
        <circle cx="51" cy="22" r="7.800" fill="#2a8cff" />
        <text x="51" y="25.500" class="gz" fill="#134a8a">Z</text>
        <text x="43" y="48.500" class="gz" fill="#2f4212">Y</text>
        <text x="82" y="53.500" class="gz" fill="#4f1a24">X</text>
      </svg>
      <div class="navbtns rightnav">
        <span class="nb">{@render ic('zoom', 20)}</span>
        <span class="nb">{@render ic('hand', 20)}</span>
        <span class="nb">{@render ic('cam', 20)}</span>
        <span class="nb">{@render ic('gridp', 20)}</span>
      </div>
      <span class="nchev vc"><svg class="ic" width="8" height="10"><path d="M5.500 1.500 2 5 5.500 8.500" fill="none" stroke="#ccc" stroke-width="1.100" /></svg></span>
    </section>

    <div class="rightcol">
      <section class="area outliner">
        <div class="bar obar">
          <span class="btn dd w31">{@render ic('tree', 15)}{@render chev()}</span>
          <span class="btn dd w31 lay">{@render ic('layers', 15)}{@render chev()}</span>
          <span class="osearch">{@render ic('search', 13)}</span>
          <span class="spring"></span>
          <span class="btn dd w31">{@render ic('funnel', 15)}{@render chev()}</span>
          <span class="newc">{@render ic('newcoll', 15)}</span>
        </div>
        <div class="orows">
          {#each objs as [name, mod], i}
            <div class="orow dimrow" class:alt={i % 2 === 0}>
              <span class="oline"></span><span class="oarrow"></span>
              <span class="oic">{@render ic('tri', 15)}</span>
              <span class="oname">{name}</span>
              {#if mod}<span class="oextra">{@render ic('wrench', 15)}</span>{/if}
              <span class="oextra" class:m2={mod}>{@render ic('mesh', 15)}</span>
              <span class="oeye">{@render ic('eyeoff', 14)}</span>
            </div>
          {/each}
          <div class="orow active">
            <span class="oline"></span><span class="oarrow"></span>
            <span class="oic box">{@render ic('tri', 15)}</span>
            <span class="oname sel">editing</span>
            <span class="oextra">{@render ic('mesh', 15)}</span>
            <span class="oeye">{@render ic('eye', 14)}</span>
          </div>
          <div class="orow">
            <span class="oline short"></span><span class="oarrow"></span>
            <span class="oic">{@render ic('tri', 15)}</span>
            <span class="oname">roof_object</span>
            <span class="oextra">{@render ic('mesh', 15)}</span>
            <span class="oeye">{@render ic('eye', 14)}</span>
          </div>
        </div>
      </section>

      <section class="area props">
        <div class="bar pbar">
          <span class="btn dd w31">{@render ic('props', 15)}{@render chev()}</span>
          <span class="crumb c1">{@render ic('objmode', 15)}</span><span class="ctxt">editing</span>
          <span class="crumb c2">{@render ic('mat', 15)}</span><span class="ctxt bright">Material_final</span>
          <span class="spring"></span>
          <span class="pinb">{@render ic('pin', 14)}</span>
        </div>
        <div class="pbody">
          <aside class="ptabs">
            <div class="pt-g one"><span class="pt">{@render ic('tool', 15)}</span></div>
            <div class="pt-g">{#each tg2 as t}<span class="pt">{@render ic(t, 16)}</span>{/each}</div>
            <div class="pt-g">{#each tg3 as t}<span class="pt" class:cur={t === 't-mat'}>{@render ic(t, 16)}</span>{/each}</div>
            <div class="pt-g"><span class="pt">{@render ic('t-tex', 15)}</span></div>
          </aside>
          <div class="pcontent">
            <div class="slotrow">
              <div class="slots">
                <div class="slot"><svg class="ball" width="14" height="14"><defs><linearGradient id="mb" x1="0" y1="0" x2="0" y2="1"><stop offset="0" stop-color="#9aa8b0" /><stop offset=".35" stop-color="#e9d9a0" /><stop offset=".6" stop-color="#e86a5a" /><stop offset=".8" stop-color="#c070c0" /><stop offset="1" stop-color="#555" /></linearGradient></defs><circle cx="7" cy="7" r="6.500" fill="url(#mb)" /></svg><span>Material</span></div>
                <div class="slot act"><svg class="ball" width="14" height="14"><circle cx="7" cy="7" r="6.500" fill="url(#redball)" /></svg><span>Material_final</span></div>
                <div class="slotfoot"><span class="tri-r"></span><span class="grip small"></span></div>
                <div class="redbox"></div>
              </div>
              <div class="slotside">
                <div class="vseg"><span>{@render ic('plus', 12)}</span><span>{@render ic('minus', 12)}</span></div>
                <div class="vone">{@render chev()}</div>
                <div class="vseg"><span><i class="up"></i></span><span><i class="down"></i></span></div>
              </div>
            </div>
            <div class="matrow">
              <span class="idic mb">{@render ic('mat', 15)}{@render chev()}</span>
              <span class="idname mf">Material_final</span>
              <span class="idbtn s1">{@render ic('shield', 15)}</span>
              <span class="idbtn s1">{@render ic('copy', 14)}</span>
              <span class="idbtn s1"><svg class="ic" width="9" height="9"><use href="#x" /></svg></span>
              <span class="btn dd linkb">{@render ic('meshw', 14)}{@render chev()}</span>
            </div>
            <div class="phead prev"><span class="tri-r big"></span><span>Preview</span><span class="grip"></span></div>
            <div class="phead surf"><span class="tri-d"></span><span>Surface</span><span class="grip"></span></div>
            <div class="surface">
              <div class="usenodes"><span class="unic">{@render ic('nodes', 15)}</span>Use Nodes</div>
              <div class="prow r-surf">
                <label>Surface</label><span class="field node"><i class="dot gn"></i>Principled BSDF</span>
              </div>
              <div class="prow"><label></label><span class="field dropf">GGX{@render chev()}</span><b></b></div>
              <div class="prow"><label></label><span class="field dropf">Christensen-Burley{@render chev()}</span><b></b></div>
              <div class="prow"><label>Base Color</label><span class="sock"><i class="dot yl"></i></span><span class="colr red"></span><b></b></div>
              <div class="prow"><label>Subsurface</label><span class="sock"><i class="dot gy"></i></span><span class="slide">0.000</span><b></b></div>
              <div class="prow tall">
                <label>Subsurface Radius</label><span class="sock"><i class="dot pu"></i></span>
                <div class="stack"><span>1.000</span><span>0.200</span><span>0.100</span></div>
                <div class="dots"><b></b><b></b><b></b></div>
              </div>
              <div class="prow"><label>Subsurface Color</label><span class="sock"><i class="dot yl"></i></span><span class="colr white"></span><b></b></div>
              {#each props as p}
                <div class="prow">
                  <label>{p.l}</label><span class="sock"><i class="dot gy"></i></span>
                  <span class="slide"><i class="fill" style="width:{p.f}%"></i><em>{p.v}</em></span><b></b>
                </div>
              {/each}
            </div>
          </div>
        </div>
      </section>
    </div>
  </main>

  <footer class="status">
    <span class="st s-a">{@render ic('mouseL', 16)}<span>Select</span></span>
    <span class="st s-b">{@render ic('mouseL', 16)}<span>Box Select</span></span>
    <span class="st s-c">{@render ic('mouseM', 16)}<span>Rotate View</span></span>
    <span class="st s-d">{@render ic('mouseR', 16)}<span>Object Context Menu</span></span>
    <span class="spring"></span>
    <span class="ver">2.90.1</span>
  </footer>
</div>

<style>
  :global(body) { margin: 0; background: #232323; overflow: hidden; }
  .defs { position: absolute; }
  .root {
    width: 1920px; height: 1017px; display: flex; flex-direction: column; overflow: hidden;
    font: 10.3px/1 "DejaVu Sans", sans-serif; color: #d4d4d4; background: #1f1f1f;
  }
  .ic { display: block; flex: none; overflow: visible; }
  .chev { color: #d0d0d0; }
  .spring { flex: 1; }
  .grow { flex: 1; }

  .topbar { height: 27px; flex: none; display: flex; align-items: center; background: #232323; }
  .logo { margin-left: 9px; width: 18px; }
  .menus { display: flex; margin-left: 9px; gap: 13.500px; color: #d8d8d8; font-size: 10.6px; }
  .tabs { display: flex; align-items: flex-end; margin-left: 23px; height: 25px; gap: 2px; align-self: flex-end; font-size: 10.100px; }
  .tab { height: 19px; padding: 0 8.600px; margin-bottom: 0; display: flex; align-items: center; background: #2d2d2d; color: #8f8f8f; border-radius: 4px 4px 0 0; }
  .tab.on { background: #434343; color: #e6e6e6; }
  .tab.plus { padding: 0 4px; width: 12px; justify-content: center; }
  .idbox { width: 190px; height: 20px; display: flex; background: #3a3a3a; border-radius: 4px; border: 1px solid #3b3b3b; box-sizing: border-box; }
  .idbox.vl { margin-left: 6px; margin-right: 8px; width: 192px; }
  .idic { width: 30px; display: flex; align-items: center; justify-content: center; background: #282828; border-radius: 3px 0 0 3px; color: #ddd; flex: none; }
  .idname { flex: 1; display: flex; align-items: center; padding-left: 7px; background: #1d1d1d; color: #d8d8d8; overflow: hidden; white-space: nowrap; }
  .idbtn { width: 19px; flex: none; display: flex; align-items: center; justify-content: center; background: #585858; color: #888; }
  .idbtn.dim { background: #3d3d3d; color: #777; border-radius: 0 3px 3px 0; }

  .main { flex: 1; display: flex; gap: 3px; padding: 0 0 1px 1px; min-height: 0; background: #1f1f1f; }
  .area { position: relative; border-radius: 5px; overflow: hidden; }
  .imgedit { width: 270px; flex: none; background: #434343; display: flex; flex-direction: column; }
  .view3d { width: 1311px; flex: none; background: #3c3c3c; }
  .rightcol { flex: 1; display: flex; flex-direction: column; gap: 4px; min-width: 0; }

  .bar { display: flex; align-items: center; }
  .bar1 { height: 25px; background: #3e3e3e; box-sizing: border-box; padding-left: 7px; flex: none; }
  .bar2 { height: 26px; background: #3a3a3a; flex: none; }
  .btn { height: 18px; background: #282828; border-radius: 3px; color: #d4d4d4; display: inline-flex; align-items: center; box-sizing: border-box; flex: none; }
  .dd { padding: 0 3px 0 6px; justify-content: space-between; }
  .w32 { width: 31px; }
  .selbig { margin-left: 13px; width: 22px; }
  .seg { display: flex; margin-left: 14px; }
  .segb { width: 18px; height: 18px; background: #585858; display: flex; align-items: center; justify-content: center; border-right: 1px solid #3e3e3e; }
  .segb:first-child { border-radius: 3px 0 0 3px; }
  .segb:last-child { border-radius: 0 3px 3px 0; border: 0; }
  .blue { background: #4c75b0 !important; }
  .mi { color: #cfcfcf; padding: 0 6px; height: 19px; display: inline-flex; align-items: center; }
  .mi.first { margin-left: 8px; }
  .mi.img { margin-left: 3px; }
  .mi.b { background: #353535; border-radius: 3px; margin-left: 2px; padding: 0 6.500px; }
  .mi.b.mview { margin-left: 7px; }
  .imgpick { display: flex; height: 18px; margin-left: 16px; flex: none; width: 161px; }
  .imgpick .idname { color: #d8d8d8; }
  .clipbtn { width: 10px; background: #4a4a4a; overflow: hidden; display: flex; align-items: center; }

  .canvas { position: relative; flex: 1; }
  .tools { display: flex; flex-direction: column; gap: 6px; width: 40px; margin: 8px 0 0 8px; }
  .ltools { margin-top: 9px; }
  .ltools .tgroup:first-child { margin-bottom: -1px; }
  .tgroup { background: #2b2b2b; border-radius: 4px; overflow: hidden; }
  .tb { position: relative; height: 34.500px; display: flex; align-items: center; justify-content: center; box-shadow: 0 1px 0 #333; }
  .tb.on { background: #4c75b0; }
  .tb.corner::after { content: ""; position: absolute; right: 2px; bottom: 2px; border: 2.500px solid transparent; border-right-color: #8a8a8a; border-bottom-color: #8a8a8a; }
  .navbtns { position: absolute; display: flex; flex-direction: column; gap: 2px; }
  .nb { width: 28px; height: 28px; border-radius: 50%; background: #333; display: flex; align-items: center; justify-content: center; }
  .leftnav { left: 233px; top: 9px; }
  .rightnav { right: 8px; top: 141px; gap: 3px; }
  .nchev { position: absolute; left: 263px; top: 15px; width: 8px; height: 14px; background: #333; border-radius: 4px 0 0 4px; display: flex; align-items: center; }
  .nchev.vc { left: auto; right: 0; top: 66px; }
  .palette { position: absolute; left: 12px; top: 327px; width: 256px; height: 256px; display: grid; grid-template-columns: repeat(8, 32px); grid-auto-rows: 32px; }
  .swatch { display: block; }

  .scene { position: absolute; left: 0; top: 0; }
  .view3d > .bar, .vtools, .vinfo, .navgizmo, .rightnav, .nchev { z-index: 1; }
  .vb1 { position: relative; padding-right: 7px; }
  .vb2 { position: relative; height: 26px; padding: 0 7px 0 9px; }
  .w30 { width: 30px; }
  .vmove { margin-left: 23px; }
  .txt { color: #cfcfcf; }
  .orient { margin-left: 14px; }
  .iconb { width: 24px; margin-left: 26px; justify-content: center; border-radius: 3px 0 0 3px; }
  .dflt { width: 73px; padding-left: 4px; border-radius: 0 3px 3px 0; }
  .drag { margin-left: 18px; }
  .selb { width: 89px; margin-left: 18px; padding-left: 7px; }
  .glob { width: 78px; padding-left: 4px; margin-left: 103px; }
  .gtxt { margin-left: 6px; }
  .piv { width: 30px; margin-left: 7px; padding-left: 3px; }
  .snapseg { display: flex; margin-left: 7px; }
  .magn { width: 18px; height: 18px; background: #585858; border-radius: 3px 0 0 3px; display: flex; align-items: center; justify-content: center; }
  .snp { width: 32px; padding-left: 3px; border-radius: 0 3px 3px 0; }
  .propedit { display: flex; gap: 3px; margin-left: 7px; width: 46px; opacity: .8; }
  .opts { width: 61px; margin-left: auto; }
  .omode { width: 108px; padding-left: 5px; background: #2a2a2a; }
  .omt { margin-left: 7px; }
  .w30b { width: 30px; padding-left: 3px; margin-right: 7px; }
  .joined { display: flex; margin-right: 7px; }
  .joined.j3 { margin-right: 0; }
  .jb { width: 19px; height: 18px; background: #282828; display: flex; align-items: center; justify-content: center; flex: none; }
  .jb.g { background: #585858; }
  .jb.xr { background: #383838; border-radius: 3px; margin-right: 7px; }
  .joined .jb:first-child { border-radius: 3px 0 0 3px; }
  .joined .jb:last-child { border-radius: 0 3px 3px 0; }
  .vtools { position: absolute; left: 8px; top: 60px; margin: 0; }
  .vinfo { position: absolute; left: 66px; top: 58px; color: #f0f0f0; line-height: 18px; font-size: 10.300px; text-shadow: 0 1px 2px #000; }
  .navgizmo { position: absolute; right: 0; top: 48px; left: 1211px; overflow: visible; }
  .gz { font: bold 9.500px "DejaVu Sans", sans-serif; text-anchor: middle; }

  .outliner { height: 210px; flex: none; background: #282828; border-radius: 0 0 5px 5px; }
  .obar { height: 25px; background: #3a3a3a; padding: 0 9px 0 8px; }
  .w31 { width: 31px; padding-left: 4px; }
  .lay { margin-left: 6px; }
  .osearch { width: 110px; height: 18px; margin-left: 23px; background: #1d1d1d; border-radius: 3px; display: flex; align-items: center; padding-left: 3px; box-sizing: border-box; }
  .newc { width: 18px; height: 20px; margin-left: 7px; background: #585858; border-radius: 3px; display: flex; align-items: center; justify-content: center; }
  .orows { height: 185px; background: #282828; margin-top: -2px; position: relative; }
  .orow { position: relative; height: 20px; display: flex; align-items: center; padding-left: 62px; background: #282828; color: #d8d8d8; }
  .orow.alt { background: #2b2b2b; }
  .dimrow .oic, .dimrow .oname, .dimrow .oextra { opacity: .5; }
  .oline { position: absolute; left: 49px; top: 0; bottom: 0; width: 1px; background: #555; }
  .oline.short { bottom: 10px; }
  .oarrow { position: absolute; left: 47px; top: 7px; width: 16px; height: 1px; margin-top: 3px; background: #555; }
  .oarrow::before { content: ""; position: absolute; left: -1px; top: -3px; border: 3.500px solid transparent; border-left: 5px solid #bbb; border-right: 0; }
  .oic { position: relative; width: 18px; height: 18px; margin-right: 5px; display: flex; align-items: center; justify-content: center; }
  .oic.box { background: #5d7295; border-radius: 3px; outline: 1px solid #6f83a3; }
  .orow.active { background: #3b5689; }
  .oname.sel { color: #f2a52e; }
  .oextra { margin-left: 24px; display: flex; }
  .oextra.m2 { margin-left: 5px; }
  .oeye { position: absolute; right: 11px; top: 3px; }

  .props { flex: 1; background: #3c3c3c; display: flex; flex-direction: column; min-height: 0; }
  .pbar { height: 25px; background: #3a3a3a; padding: 0 9px 0 8px; flex: none; }
  .crumb { margin-right: 7px; }
  .c1 { margin-left: 16px; }
  .c2 { margin-left: 31px; }
  .ctxt { color: #c4c4c4; }
  .ctxt.bright { color: #d8d8d8; }
  .pinb { margin-right: -1px; }
  .pbody { flex: 1; display: flex; min-height: 0; background: #232323; }
  .ptabs { width: 28px; flex: none; background: #232323; display: flex; flex-direction: column; gap: 7px; padding-top: 9px; box-sizing: border-box; padding-left: 2px; }
  .pt-g { background: #2d2d2d; border-radius: 4px 0 0 4px; display: flex; flex-direction: column; }
  .pt { height: 28.400px; display: flex; align-items: center; justify-content: center; }
  .pt-g.one .pt { height: 26px; }
  .pt.cur { background: #3c3c3c; border-radius: 4px 0 0 4px; }
  .pcontent { flex: 1; background: #3e3e3e; min-width: 0; overflow: hidden; }
  .slotrow { display: flex; padding: 9px 9px 0 10px; height: 118px; }
  .slots { position: relative; width: 256px; height: 118px; background: #333; border-radius: 4px; }
  .slot { display: flex; align-items: center; gap: 10px; height: 18px; padding-left: 8px; margin-left: 0; color: #d8d8d8; }
  .slot:first-child { margin-top: 6px; }
  .slot.act { margin: 1px 3px 0 5px; padding-left: 3px; background: #646872; border-radius: 3px; }
  .ball { display: block; flex: none; }
  .slotfoot { position: absolute; left: 0; right: 0; bottom: 5px; height: 10px; }
  .tri-r { display: inline-block; border: 3px solid transparent; border-left: 5px solid #aaa; border-right: 0; }
  .slotfoot .tri-r { position: absolute; left: 12px; top: 2px; }
  .grip { width: 11px; height: 6px; background-image: radial-gradient(#8a8a8a 0.7px, transparent .8px); background-size: 3px 3px; }
  .grip.small { position: absolute; left: 133px; top: 2px; }
  .redbox { position: absolute; left: 3px; top: 21px; width: 246px; height: 37px; border: 2px solid #f00; pointer-events: none; }
  .slotside { margin-left: 10px; width: 18px; display: flex; flex-direction: column; gap: 8px; }
  .vseg { display: flex; flex-direction: column; background: #585858; border-radius: 3px; overflow: hidden; gap: 1px; }
  .vseg span { height: 18.700px; display: flex; align-items: center; justify-content: center; background: #585858; }
  .vone { height: 18px; background: #282828; border-radius: 3px; display: flex; align-items: center; justify-content: center; }
  .up { border: 4px solid transparent; border-bottom: 5px solid #ddd; border-top: 0; }
  .down { border: 4px solid transparent; border-top: 5px solid #ddd; border-bottom: 0; }
  .matrow { display: flex; height: 18px; margin: 7px 9px 0 10px; }
  .mb { width: 31px; }
  .mf { flex: none; width: 154px; box-sizing: border-box; }
  .idbtn.s1 { width: 19px; margin-right: 1px; background: #555; color: #ccc; }
  .linkb { width: 30px; margin-left: 8px; padding-left: 4px; }
  .phead { display: flex; align-items: center; color: #c4c4c4; height: 25px; padding: 0 9px 0 12px; gap: 7px; font-size: 10.800px; }
  .phead .grip { margin-left: auto; }
  .prev { margin-top: 10px; }
  .tri-r.big { border-width: 4px; border-left-width: 5px; }
  .tri-d { border: 4px solid transparent; border-top: 6px solid #aaa; border-bottom: 0; }
  .surface { background: #3a3a3a; padding: 6px 9px 0 10px; height: 560px; }
  .usenodes { position: relative; height: 18px; background: #4c75b0; border-radius: 3px; display: flex; align-items: center; justify-content: center; color: #eee; margin-bottom: 17.500px; }
  .unic { position: absolute; left: 3px; top: 1px; }
  .prow { position: relative; display: flex; height: 19px; margin: 0 -9px 6.050px -10px; align-items: stretch; padding-right: 29px; }
  .r-surf { margin-bottom: 17.500px; }
  .prow label { width: 105px; flex: none; margin-right: 10px; text-align: right; color: #d0d0d0; line-height: 19px; white-space: nowrap; overflow: hidden; text-shadow: 0 1px 1px rgba(0,0,0,.4); }
  .prow > b, .dots b { display: block; width: 4px; height: 4px; border-radius: 50%; background: #d8d8d8; }
  .prow > b { position: absolute; right: 16px; top: 8px; }
  .field { flex: 1; background: #282828; border-radius: 3px; display: flex; align-items: center; padding: 0 3px 0 8px; color: #d0d0d0; }
  .dropf { justify-content: space-between; }
  .node { gap: 8px; padding-left: 6px; }
  .dot { display: block; width: 7.500px; height: 7.500px; border-radius: 50%; flex: none; }
  .gn { background: #5ec45e; }
  .yl { background: #c7c729; }
  .gy { background: #a1a1a1; }
  .pu { background: #6363c7; }
  .sock { width: 19px; flex: none; background: #282828; border-radius: 3px 0 0 3px; display: flex; align-items: center; justify-content: center; }
  .colr { flex: 1; border-radius: 0 3px 3px 0; }
  .red { background: #e81c14; }
  .white { background: #e8e8e8; }
  .slide { position: relative; flex: 1; background: #545454; border-radius: 0 3px 3px 0; display: flex; align-items: center; justify-content: center; color: #dcdcdc; overflow: hidden; text-shadow: 0 1px 1px rgba(0,0,0,.5); }
  .fill { position: absolute; left: 0; top: 0; bottom: 0; background: #4c75b0; }
  .slide em { position: relative; font-style: normal; }
  .prow.tall { height: 59px; margin-bottom: 6px; }
  .tall .sock { height: 19px; border-radius: 3px; }
  .stack { flex: 1; margin-left: 7px; display: flex; flex-direction: column; gap: 1px; border-radius: 4px; overflow: hidden; }
  .stack span { flex: 1; background: #545454; display: flex; align-items: center; justify-content: center; color: #dcdcdc; text-shadow: 0 1px 1px rgba(0,0,0,.5); }
  .dots { position: absolute; right: 16px; top: 8px; display: flex; flex-direction: column; gap: 15.500px; }

  .status { height: 20px; flex: none; background: #2b2b2b; display: flex; align-items: center; color: #aaa; padding-right: 17px; }
  .st { display: flex; align-items: center; gap: 9px; position: relative; }
  .s-a { margin-left: 9px; }
  .s-b { margin-left: 9px; }
  .s-c { margin-left: 92px; }
  .s-d { margin-left: 150px; }
  .ver { color: #999; font-size: 10.600px; }
</style>
